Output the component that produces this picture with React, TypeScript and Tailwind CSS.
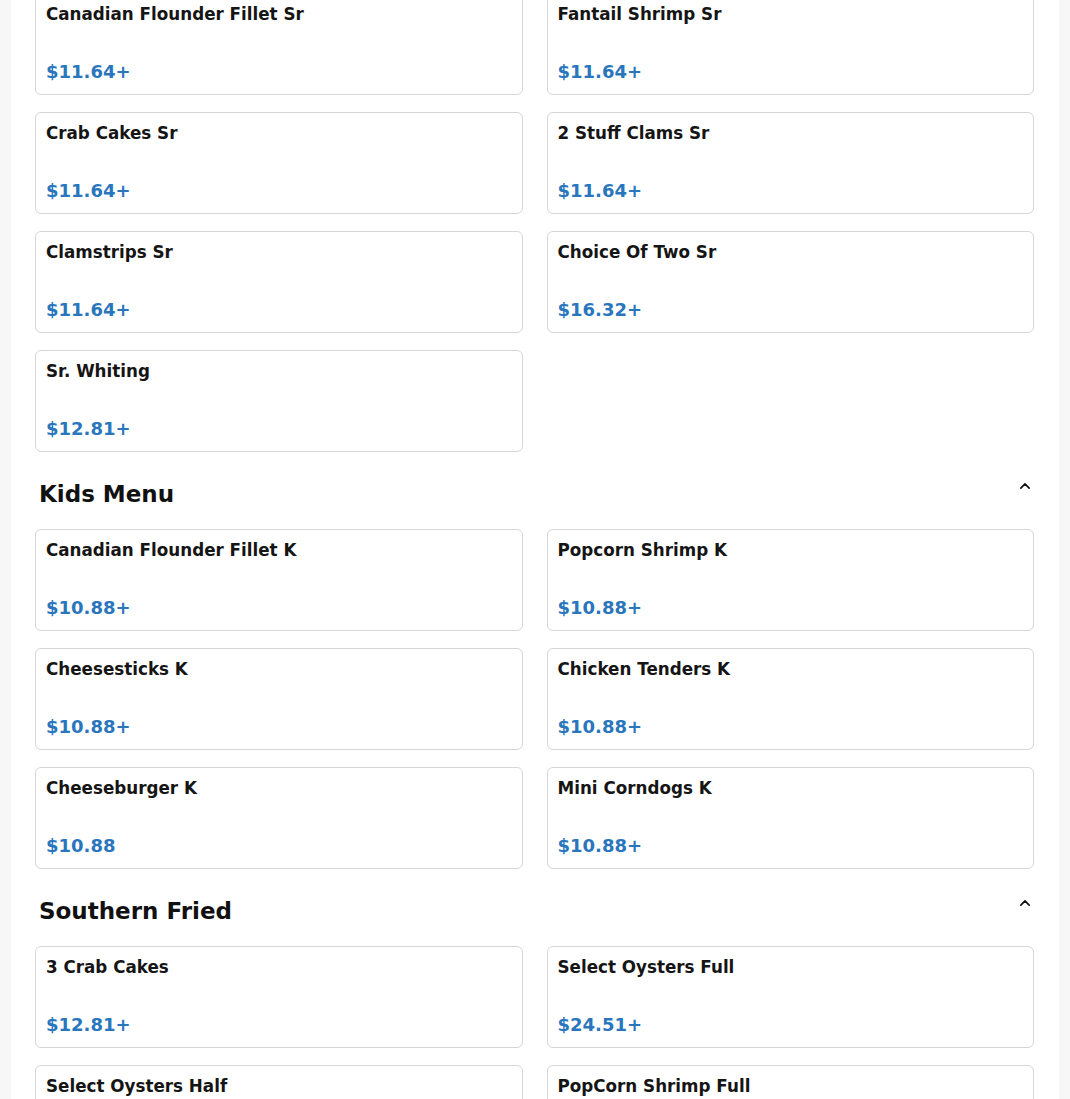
import React from 'react';

type Item = { name: string; price: string };

const sections: { title?: string; items: Item[] }[] = [
  {
    items: [
      { name: 'Canadian Flounder Fillet Sr', price: '$11.64+' },
      { name: 'Fantail Shrimp Sr', price: '$11.64+' },
      { name: 'Crab Cakes Sr', price: '$11.64+' },
      { name: '2 Stuff Clams Sr', price: '$11.64+' },
      { name: 'Clamstrips Sr', price: '$11.64+' },
      { name: 'Choice Of Two Sr', price: '$16.32+' },
      { name: 'Sr. Whiting', price: '$12.81+' },
    ],
  },
  {
    title: 'Kids Menu',
    items: [
      { name: 'Canadian Flounder Fillet K', price: '$10.88+' },
      { name: 'Popcorn Shrimp K', price: '$10.88+' },
      { name: 'Cheesesticks K', price: '$10.88+' },
      { name: 'Chicken Tenders K', price: '$10.88+' },
      { name: 'Cheeseburger K', price: '$10.88' },
      { name: 'Mini Corndogs K', price: '$10.88+' },
    ],
  },
  {
    title: 'Southern Fried',
    items: [
      { name: '3 Crab Cakes', price: '$12.81+' },
      { name: 'Select Oysters Full', price: '$24.51+' },
      { name: 'Select Oysters Half', price: '$12.81+' },
      { name: 'PopCorn Shrimp Full', price: '$16.32+' },
    ],
  },
];

const ItemCard = ({ item }: { item: Item }) => (
  <div className="flex h-[102px] flex-col justify-between rounded-md border border-[#d6d6d6] bg-white px-[10px] pt-[9px] pb-[9px]">
    <div className="text-[16.75px] font-bold leading-[22px] text-[#151515]">{item.name}</div>
    <div className="text-[18px] font-bold leading-[27px] text-[#2a76bd]">{item.price}</div>
  </div>
);

const Chevron = () => (
  <svg width="20" height="20" viewBox="0 0 24 24" fill="none" stroke="#111" strokeWidth="2" strokeLinecap="round" strokeLinejoin="round">
    <path d="M7 14.5l5-5 5 5" />
  </svg>
);

export default function App() {
  return (
    <div className="min-h-screen bg-[#f7f7f7] px-[11px]" style={{ fontFamily: '"DejaVu Sans", sans-serif' }}>
      <div className="-mt-[7px] bg-white pl-[24px] pr-[25px] pb-8">
        {sections.map((s, i) => (
          <div key={i}>
            {s.title && (
              <div className="flex items-start justify-between pt-[26px] pb-[19px] pl-[4px] pr-0">
                <h2 className="text-[23px] font-bold leading-[32px] text-[#111]">{s.title}</h2>
                <div className="-mt-[2px] -mr-[1px]">
                  <Chevron />
                </div>
              </div>
            )}
            <div className="grid grid-cols-2 gap-x-[24px] gap-y-[17px]">
              {s.items.map((it) => (
                <ItemCard key={it.name} item={it} />
              ))}
            </div>
          </div>
        ))}
      </div>
    </div>
  );
}
